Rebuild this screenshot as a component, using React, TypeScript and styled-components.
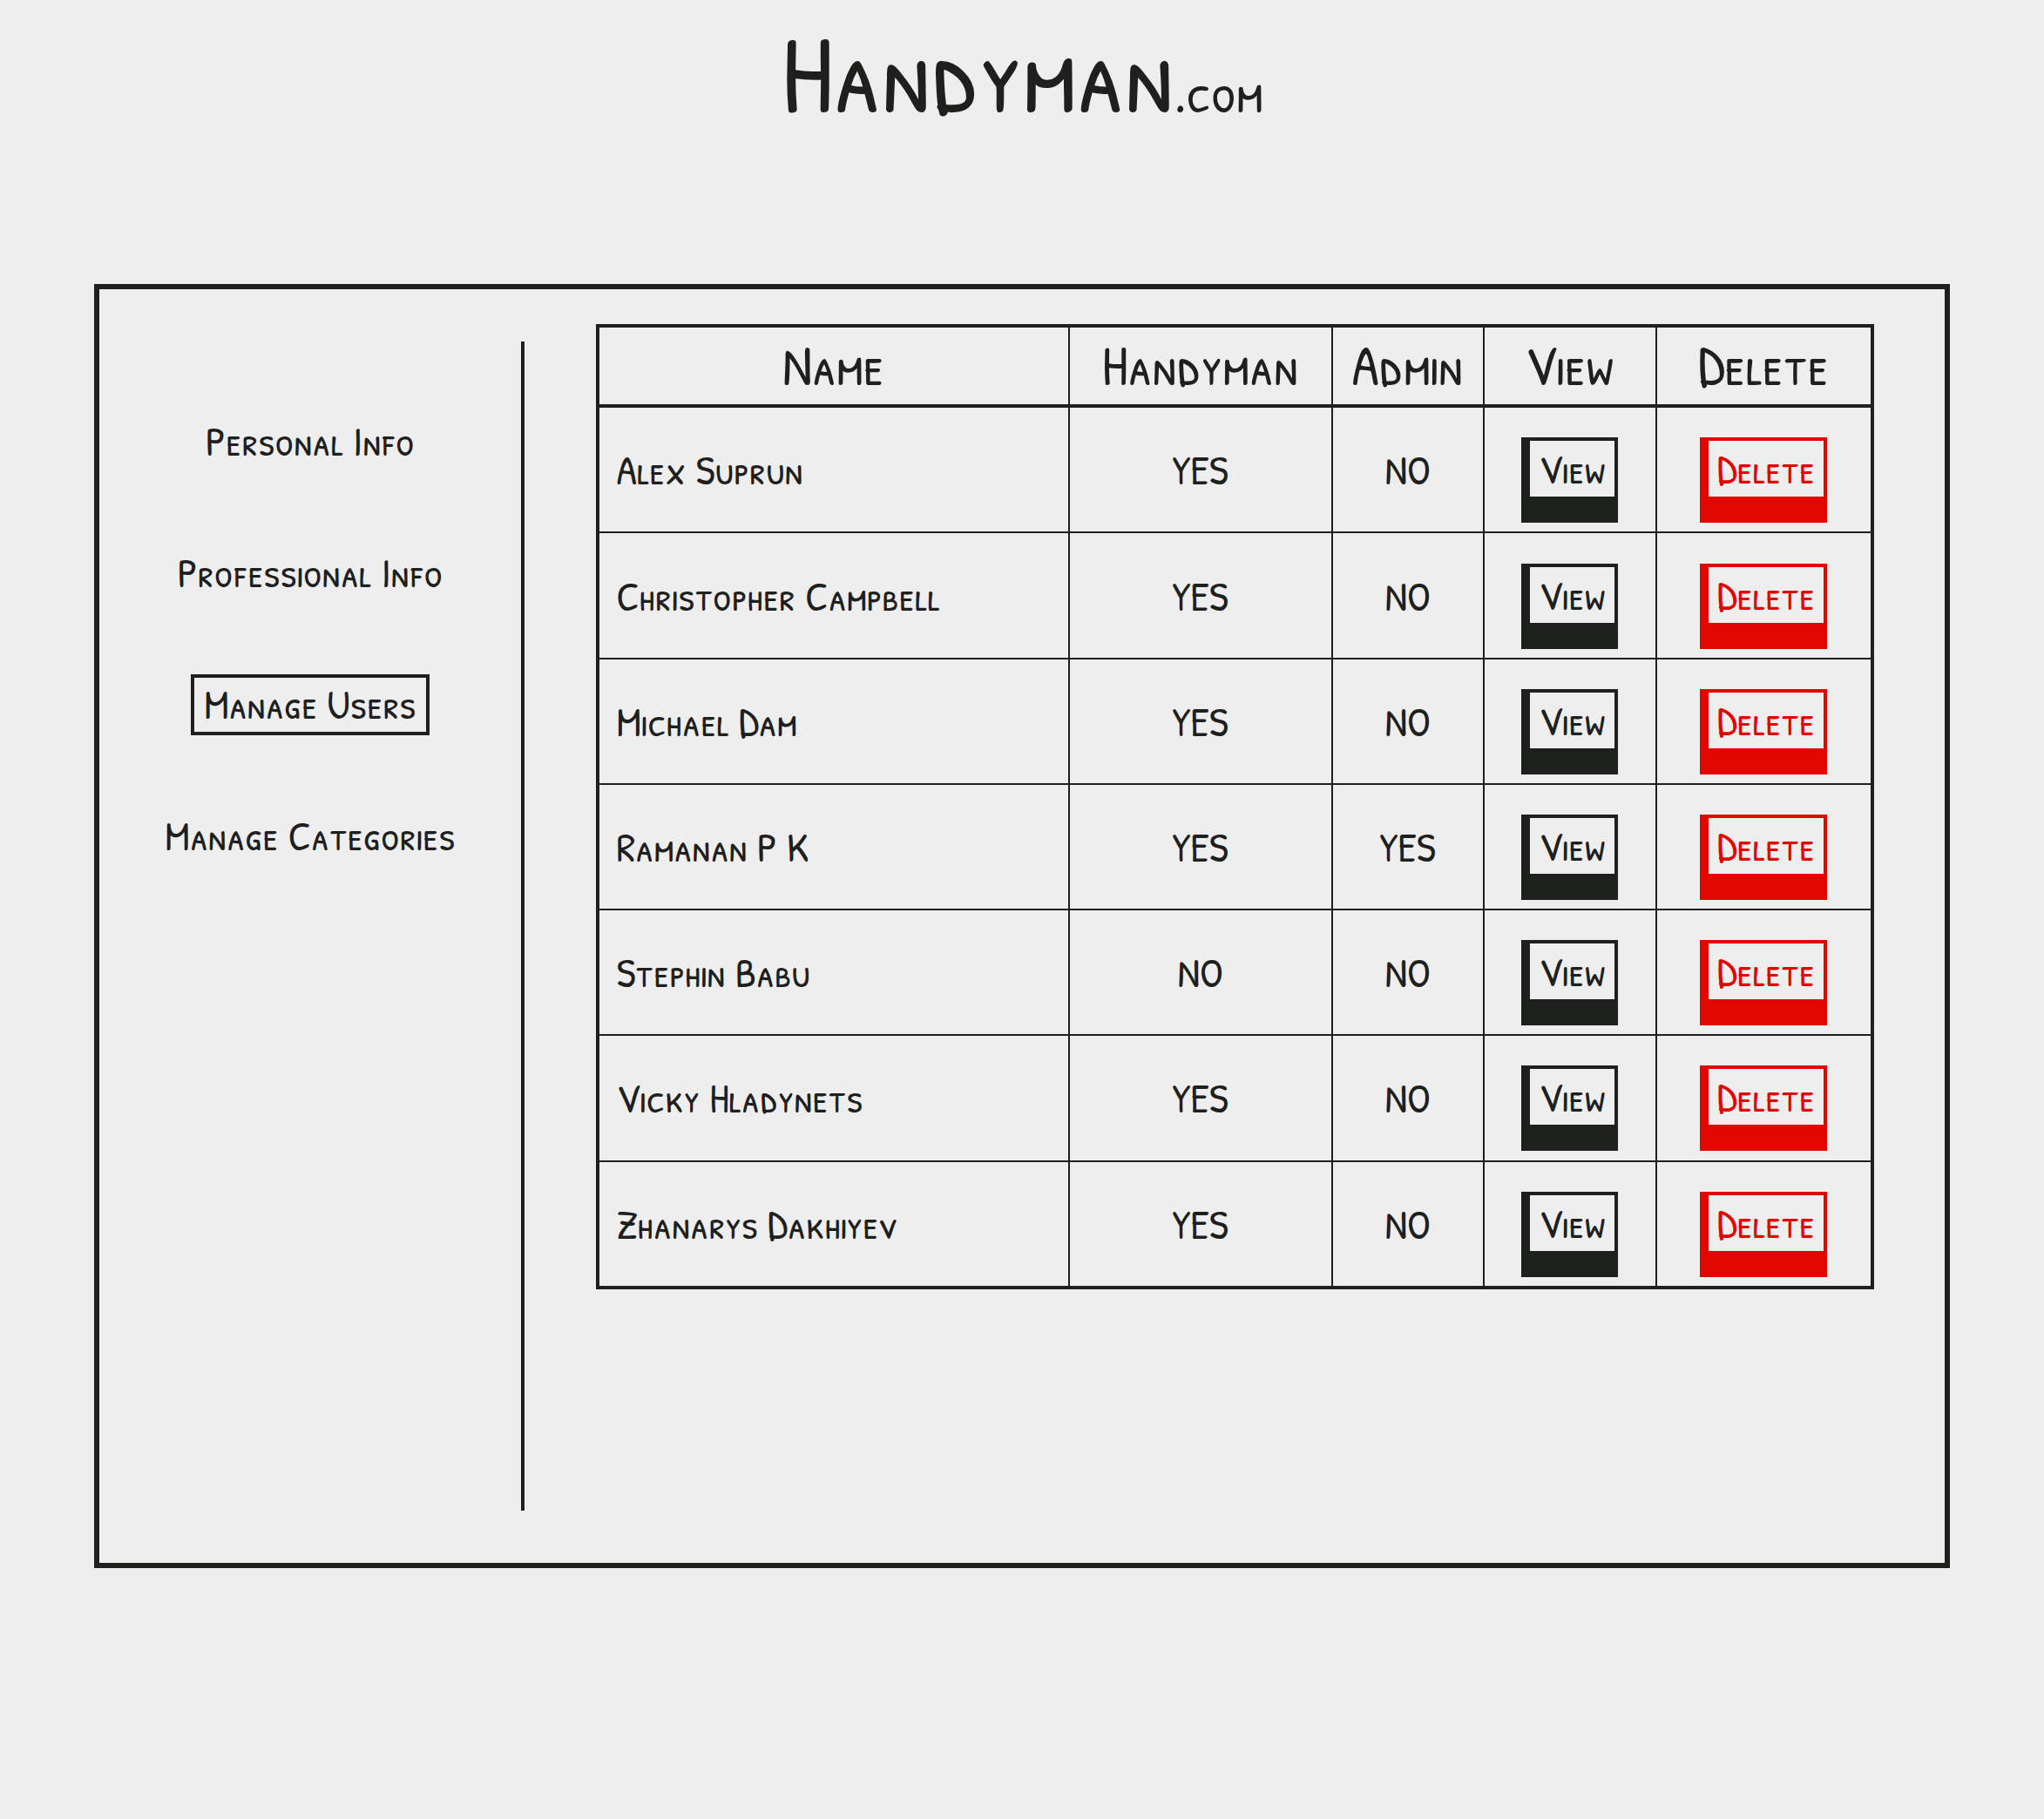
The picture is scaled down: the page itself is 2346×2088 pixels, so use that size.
import React from 'react';
import styled, { createGlobalStyle } from 'styled-components';

const ink = '#1e201e';
const paper = '#eeeeee';
const danger = '#e10600';

const GlobalStyle = createGlobalStyle`
  *, *::before, *::after {
    box-sizing: border-box;
  }

  body {
    margin: 0;
    background: ${paper};
    color: ${ink};
    font-family: 'Patrick Hand SC', 'Comic Neue', 'Lato', sans-serif;
    font-size: 48px;
    line-height: 64px;
    font-variant-ligatures: none;
  }
`;

const Page = styled.div`
  display: flex;
  flex-direction: column;
`;

const Header = styled.header`
  display: flex;
  justify-content: center;
  padding: 0 108px;
  margin-bottom: 160px;
`;

const Logo = styled.h1`
  margin: 0;
  font-size: 128px;
  line-height: 166px;
  font-weight: 400;
`;

const LogoSuffix = styled.span`
  font-size: 64px;
  line-height: 64px;
`;

const Panel = styled.main`
  display: flex;
  margin: 0 108px;
  padding: 40px 0 60px;
  border: 6px solid ${ink};
`;

const Sidebar = styled.nav`
  flex: 0 0 488px;
  min-height: 1342px;
  margin-top: 20px;
  padding-top: 80px;
  border-right: 4px solid ${ink};
`;

const Menu = styled.ul`
  display: flex;
  flex-direction: column;
  align-items: center;
  gap: 81px;
  margin: 0;
  padding: 0;
  list-style: none;
`;

const MenuLink = styled.a<{ $active: boolean }>`
  display: block;
  padding: 0 11px 2px;
  border: 4px solid ${(p) => (p.$active ? ink : 'transparent')};
  color: inherit;
  line-height: 60px;
  text-decoration: none;
`;

const Content = styled.section`
  flex: 1;
  display: flex;
  justify-content: center;
  align-items: flex-start;
`;

const Table = styled.table`
  width: 90%;
  height: 1108px;
  table-layout: fixed;
  border-collapse: collapse;
  border: 4px solid ${ink};
`;

const Column = styled.col<{ $width?: number }>`
  width: ${(p) => (p.$width ? `${p.$width}px` : 'auto')};
`;

const HeadRow = styled.tr`
  height: 92px;
`;

const HeadCell = styled.th`
  padding: 0 0 2px;
  border: 2px solid ${ink};
  border-top: 4px solid ${ink};
  border-bottom: 4px solid ${ink};
  font-size: 64px;
  line-height: 86px;
  font-weight: 400;
`;

const Cell = styled.td<{ $name?: boolean }>`
  padding: 0 ${(p) => (p.$name ? 20 : 0)}px;
  border: 2px solid ${ink};
  text-align: ${(p) => (p.$name ? 'left' : 'center')};
  vertical-align: middle;
`;

const ActionButton = styled.button<{ $tone: string }>`
  display: block;
  margin: 24px auto 0;
  padding: 0 10px;
  border: solid ${(p) => p.$tone};
  border-width: 4px 4px 30px 10px;
  background: transparent;
  color: ${(p) => p.$tone};
  font: inherit;
  cursor: pointer;
`;

const menu = ['Personal Info', 'Professional Info', 'Manage Users', 'Manage Categories'];

const users = [
  { name: 'Alex Suprun', handyman: true, admin: false },
  { name: 'Christopher Campbell', handyman: true, admin: false },
  { name: 'Michael Dam', handyman: true, admin: false },
  { name: 'Ramanan P K', handyman: true, admin: true },
  { name: 'Stephin Babu', handyman: false, admin: false },
  { name: 'Vicky Hladynets', handyman: true, admin: false },
  { name: 'Zhanarys Dakhiyev', handyman: true, admin: false },
];

const yesNo = (value: boolean) => (value ? 'YES' : 'NO');

export default function App() {
  return (
    <Page>
      <GlobalStyle />
      <Header>
        <Logo>
          Handyman<LogoSuffix>.com</LogoSuffix>
        </Logo>
      </Header>
      <Panel>
        <Sidebar>
          <Menu>
            {menu.map((label) => (
              <li key={label}>
                <MenuLink
                  href="#"
                  $active={label === 'Manage Users'}
                  aria-current={label === 'Manage Users' ? 'page' : undefined}
                >
                  {label}
                </MenuLink>
              </li>
            ))}
          </Menu>
        </Sidebar>
        <Content>
          <Table>
            <colgroup>
              <Column />
              <Column $width={302} />
              <Column $width={174} />
              <Column $width={198} />
              <Column $width={248} />
            </colgroup>
            <thead>
              <HeadRow>
                <HeadCell scope="col">Name</HeadCell>
                <HeadCell scope="col">Handyman</HeadCell>
                <HeadCell scope="col">Admin</HeadCell>
                <HeadCell scope="col">View</HeadCell>
                <HeadCell scope="col">Delete</HeadCell>
              </HeadRow>
            </thead>
            <tbody>
              {users.map((user) => (
                <tr key={user.name}>
                  <Cell $name>{user.name}</Cell>
                  <Cell>{yesNo(user.handyman)}</Cell>
                  <Cell>{yesNo(user.admin)}</Cell>
                  <Cell>
                    <ActionButton type="button" $tone={ink}>
                      View
                    </ActionButton>
                  </Cell>
                  <Cell>
                    <ActionButton type="button" $tone={danger}>
                      Delete
                    </ActionButton>
                  </Cell>
                </tr>
              ))}
            </tbody>
          </Table>
        </Content>
      </Panel>
    </Page>
  );
}
